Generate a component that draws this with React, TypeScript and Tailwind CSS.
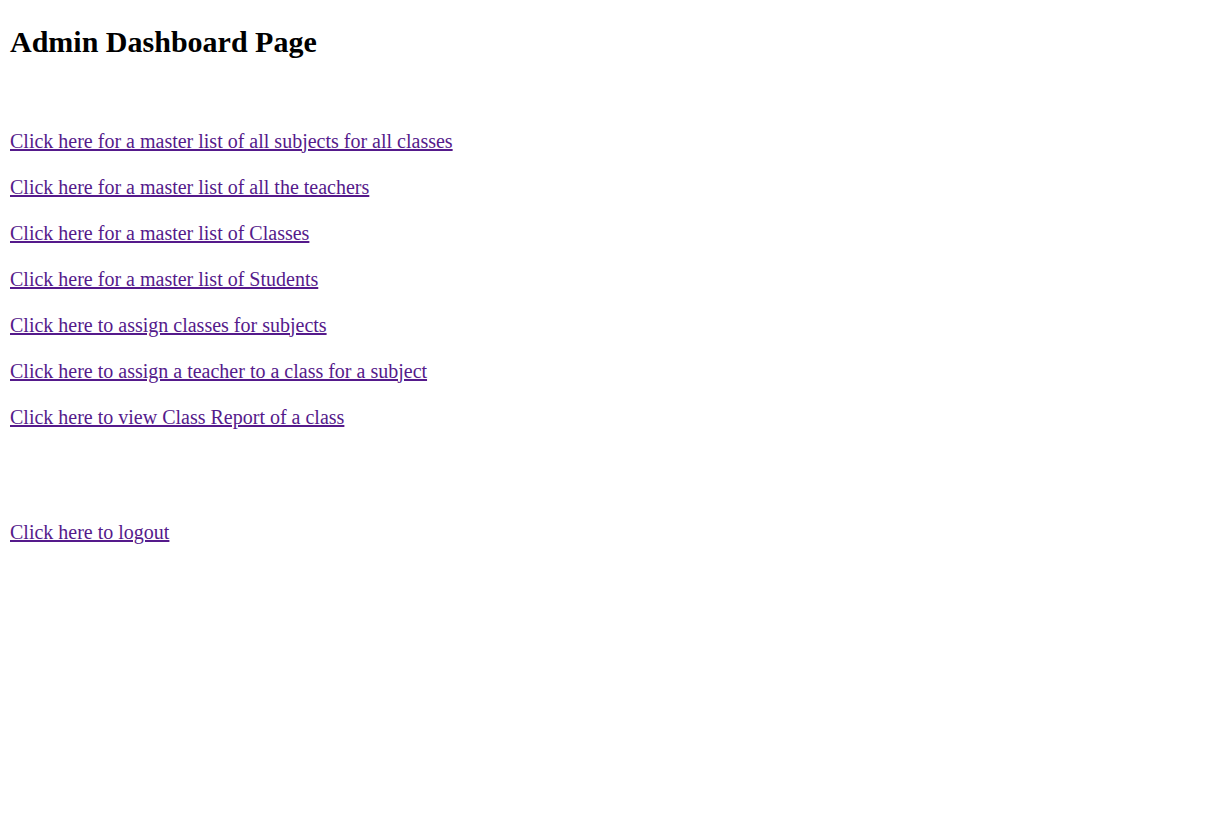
const links = [
  "Click here for a master list of all subjects for all classes",
  "Click here for a master list of all the teachers",
  "Click here for a master list of Classes",
  "Click here for a master list of Students",
  "Click here to assign classes for subjects",
  "Click here to assign a teacher to a class for a subject",
  "Click here to view Class Report of a class",
];

export default function App() {
  return (
    <div className="min-h-[830px] bg-white px-[10px] font-['Liberation_Serif','Times_New_Roman',serif] text-[20px] leading-[23px] text-black">
      <h2 className="pt-[25px] pb-[25px] text-[30px] leading-[34.5px] font-bold">Admin Dashboard Page</h2>

      <div className="mt-[45px] flex flex-col items-start gap-[23px]">
        {links.map((l) => (
          <a key={l} href="#" className="text-[#551a8b] underline">
            {l}
          </a>
        ))}
      </div>

      <div className="mt-[92px]">
        <a href="#" className="text-[#551a8b] underline">
          Click here to logout
        </a>
      </div>
    </div>
  );
}
